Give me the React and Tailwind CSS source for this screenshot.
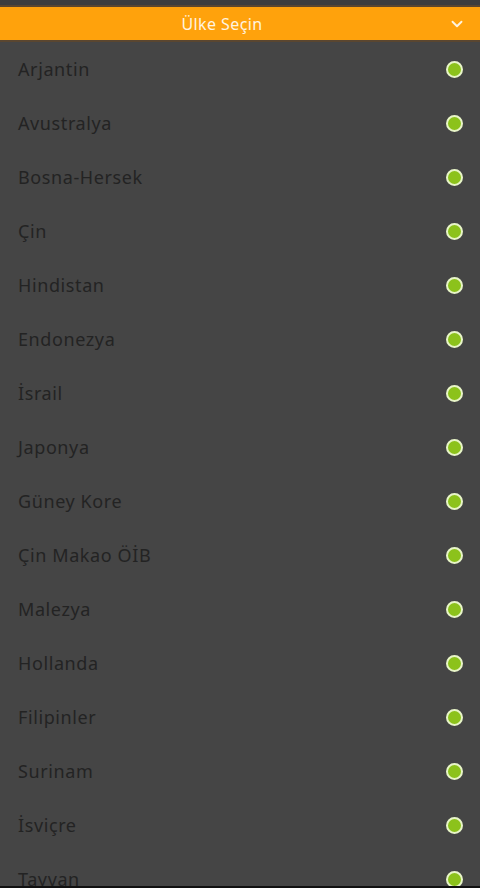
import { ChevronDown } from "lucide-react";

const countries = [
  "Arjantin",
  "Avustralya",
  "Bosna-Hersek",
  "Çin",
  "Hindistan",
  "Endonezya",
  "İsrail",
  "Japonya",
  "Güney Kore",
  "Çin Makao ÖİB",
  "Malezya",
  "Hollanda",
  "Filipinler",
  "Surinam",
  "İsviçre",
  "Tayvan",
];

const App = () => {
  return (
    <div className="relative h-[888px] overflow-hidden bg-[#454545] font-['Noto_Sans',sans-serif]">
      <div className="h-[5px] bg-[#3d3d3d]" />
      <div className="border-y-2 border-[#5a4630]">
        <div className="relative flex h-[33px] items-center justify-center bg-[#ffa20c] pr-[36px]">
          <span className="text-[16px] tracking-[0.4px] text-[#fff4e0]">Ülke Seçin</span>
          <ChevronDown
            className="absolute right-[14px] top-[8px] text-[#fff4e0]"
            size={18}
            strokeWidth={2.5}
          />
        </div>
      </div>
      <ul>
        {countries.map((name) => (
          <li
            key={name}
            className="flex h-[54px] items-center justify-between pl-[18px] pr-[17px]"
          >
            <span className="text-[18px] tracking-[0.6px] text-[#232323]">{name}</span>
            <span className="h-[17px] w-[17px] rounded-full border-2 border-[#e8f5c8] bg-[#8cc21b]" />
          </li>
        ))}
      </ul>
      <div className="absolute bottom-0 left-0 right-0 h-[2px] bg-[#111111]" />
    </div>
  );
};

export default App;
